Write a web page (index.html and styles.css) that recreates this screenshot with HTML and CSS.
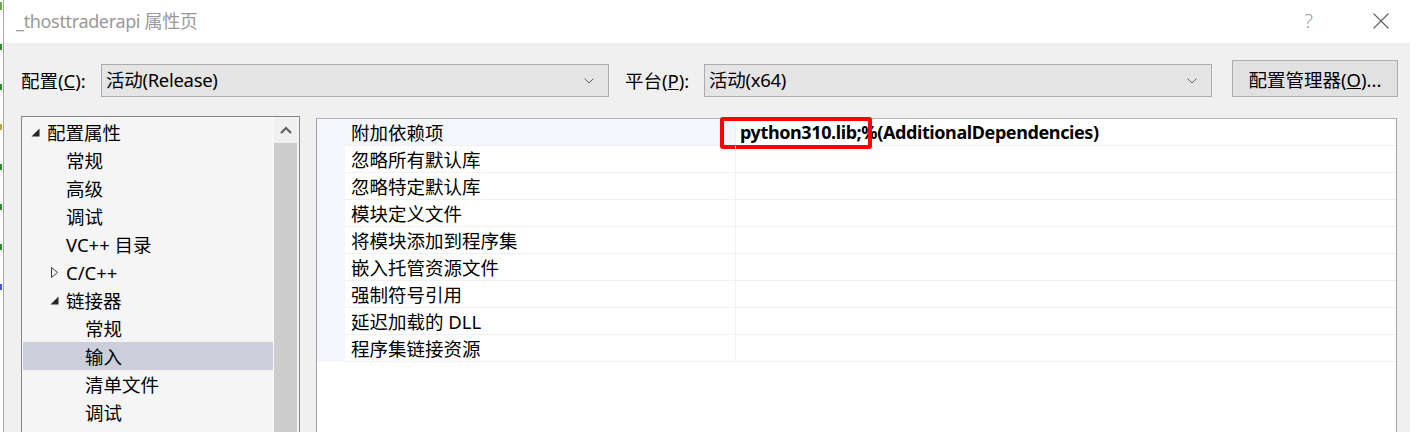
FILE: index.html
```html
<!DOCTYPE html>
<html lang="zh-CN">
<head>
<meta charset="utf-8">
<title>_thosttraderapi 属性页</title>
<link rel="stylesheet" href="styles.css">
</head>
<body>
<div class="screen">
  <div class="edge">
    <span class="bit b1"></span><span class="bit b2"></span><span class="bit b3"></span><span class="bit b4"></span><span class="bit b5"></span><span class="bit b6"></span><span class="bit b7"></span><span class="bit b8"></span>
  </div>
  <div class="dialog">
    <div class="titlebar">
      <span class="title">_thosttraderapi 属性页</span>
      <span class="help">?</span>
      <svg class="close" width="16" height="16" viewBox="0 0 16 16"><path d="M0.5 0.5L15.5 15.5M15.5 0.5L0.5 15.5" stroke="#5f5f5f" stroke-width="1.1" fill="none"/></svg>
    </div>
    <div class="toolbar">
      <span class="label">配置(<u>C</u>):</span>
      <div class="combo"><span>活动(Release)</span><svg class="chev" width="10" height="6" viewBox="0 0 10 6"><path d="M0.5 0.5L5 5L9.5 0.5" stroke="#606060" fill="none"/></svg></div>
      <span class="label label2">平台(<u>P</u>):</span>
      <div class="combo"><span>活动(x64)</span><svg class="chev" width="10" height="6" viewBox="0 0 10 6"><path d="M0.5 0.5L5 5L9.5 0.5" stroke="#606060" fill="none"/></svg></div>
      <button class="btn">配置管理器(<u>O</u>)...</button>
    </div>
    <div class="main">
      <div class="tree">
        <div class="tree-list">
          <div class="node l0"><span class="glyph"><svg width="9" height="9" viewBox="0 0 9 9"><path d="M8.5 0.5V8.5H0.5Z" fill="#262626"/></svg></span>配置属性</div>
          <div class="node l1"><span class="glyph"></span>常规</div>
          <div class="node l1"><span class="glyph"></span>高级</div>
          <div class="node l1"><span class="glyph"></span>调试</div>
          <div class="node l1"><span class="glyph"></span>VC++ 目录</div>
          <div class="node l1"><span class="glyph"><svg width="9" height="11" viewBox="0 0 9 11"><path d="M1.5 0.5V10.5L7.5 5.5Z" fill="none" stroke="#3c3c3c"/></svg></span>C/C++</div>
          <div class="node l1"><span class="glyph"><svg width="9" height="9" viewBox="0 0 9 9"><path d="M8.5 0.5V8.5H0.5Z" fill="#262626"/></svg></span>链接器</div>
          <div class="node l2"><span class="glyph"></span>常规</div>
          <div class="node l2 selected"><span class="glyph"></span>输入</div>
          <div class="node l2"><span class="glyph"></span>清单文件</div>
          <div class="node l2"><span class="glyph"></span>调试</div>
          <div class="node l2"><span class="glyph"></span>系统</div>
        </div>
        <div class="scrollbar">
          <div class="sb-up"><svg width="12" height="8" viewBox="0 0 12 8"><path d="M1 7L6 2L11 7" stroke="#606060" stroke-width="2.2" fill="none"/></svg></div>
          <div class="sb-thumb"></div>
        </div>
      </div>
      <div class="grid">
        <div class="row sel"><span class="gut"></span><span class="name">附加依赖项</span><span class="val">python310.lib;%(AdditionalDependencies)</span><span class="mark"></span></div>
        <div class="row"><span class="gut"></span><span class="name">忽略所有默认库</span><span class="val"></span></div>
        <div class="row"><span class="gut"></span><span class="name">忽略特定默认库</span><span class="val"></span></div>
        <div class="row"><span class="gut"></span><span class="name">模块定义文件</span><span class="val"></span></div>
        <div class="row"><span class="gut"></span><span class="name">将模块添加到程序集</span><span class="val"></span></div>
        <div class="row"><span class="gut"></span><span class="name">嵌入托管资源文件</span><span class="val"></span></div>
        <div class="row"><span class="gut"></span><span class="name">强制符号引用</span><span class="val"></span></div>
        <div class="row"><span class="gut"></span><span class="name">延迟加载的 DLL</span><span class="val"></span></div>
        <div class="row"><span class="gut"></span><span class="name">程序集链接资源</span><span class="val"></span></div>
      </div>
    </div>
  </div>
</div>
</body>
</html>
```
FILE: styles.css
```css
* { box-sizing: border-box; }
html, body {
  margin: 0;
  padding: 0;
  width: 1410px;
  height: 432px;
  overflow: hidden;
  background: #f0f0f0;
  font-family: "Noto Sans", "Noto Sans CJK SC", sans-serif;
  color: #000;
}
.screen {
  display: flex;
  width: 1410px;
  height: 432px;
}
.edge {
  width: 4px;
  flex: none;
  background: #fff;
  border-right: 1px solid #a9a9a9;
  display: flex;
  flex-direction: column;
}
.bit { display: block; width: 2px; height: 6px; background: #2e8b2e; margin-top: 34px; }
.bit.b1 { margin-top: 2px; height: 8px; background: #6aa84f; }
.bit.b4 { background: #c0a040; }
.bit.b8 { background: #3b5bd6; }
.dialog {
  flex: 1;
  display: flex;
  flex-direction: column;
}
.titlebar {
  height: 43px;
  background: #fff;
  display: flex;
  align-items: center;
  padding-left: 12px;
  flex: none;
}
.title {
  font-size: 18px;
  letter-spacing: -0.35px;
  color: #999;
  line-height: 1;
  margin-top: -1px;
  flex: 1;
}
.help {
  font-size: 20px;
  color: #a0a0a0;
  font-weight: 300;
  margin-right: 60px;
  margin-top: -2px;
}
.close { margin-right: 21px; margin-top: -2px; }
.toolbar {
  display: flex;
  align-items: flex-end;
  padding: 17px 0 0 17px;
  height: 54px;
  flex: none;
  font-size: 18.5px;
}
.label {
  width: 80px;
  height: 33px;
  line-height: 33px;
  flex: none;
}
.label2 { margin-left: 16px; width: 79px; }
.combo {
  width: 508px;
  height: 33px;
  background: #e5e5e5;
  border: 1px solid #acacac;
  display: flex;
  align-items: center;
  padding-left: 4px;
  padding-right: 14px;
  flex: none;
}
.combo span { flex: 1; line-height: 1; letter-spacing: -0.3px; }
.chev { margin-top: 1px; }
.btn {
  margin-left: 20px;
  width: 166px;
  height: 37px;
  background: #e1e1e1;
  border: 1px solid #adadad;
  font: inherit;
  font-size: 18.5px;
  color: #000;
  padding: 0;
  flex: none;
}
.main {
  display: flex;
  padding: 19px 0 0 17px;
  flex: 1;
  min-height: 0;
}
.tree {
  width: 279px;
  height: 320px;
  border: 1px solid #828790;
  border-bottom: none;
  background: #f5f5f5;
  display: flex;
  flex: none;
  overflow: hidden;
}
.tree-list {
  flex: 1;
  padding-top: 1px;
  padding-left: 1px;
  font-size: 18.5px;
}
.node {
  height: 28px;
  display: flex;
  align-items: center;
  white-space: nowrap;
}
.glyph {
  width: 18px;
  flex: none;
  display: flex;
  align-items: center;
  padding-left: 2px;
}
.l0 { padding-left: 6px; }
.l1 { padding-left: 25px; }
.l2 { padding-left: 44px; }
.selected { background: #cccedb; }
.scrollbar {
  width: 24px;
  margin-right: 2px;
  display: flex;
  flex-direction: column;
  border-left: 1px solid #fbfbfb;
  flex: none;
}
.sb-up {
  height: 26px;
  background: #f0f0f0;
  display: flex;
  align-items: center;
  justify-content: center;
  flex: none;
}
.sb-thumb { flex: 1; background: #cdcdcd; }
.grid {
  margin-left: 16px;
  margin-top: 2px;
  width: 1081px;
  height: 318px;
  border: 1px solid #a0a0a0;
  border-top-color: #b4b4b4;
  border-bottom: none;
  background: #fff;
  font-size: 18.5px;
  flex: none;
}
.row {
  height: 27px;
  display: flex;
  position: relative;
}
.gut {
  width: 28px;
  flex: none;
  background: #f3f6fb;
}
.name {
  width: 391px;
  flex: none;
  padding-left: 6px;
  display: flex;
  align-items: center;
  border-bottom: 1px solid #eff1f6;
  border-right: 1px solid #f0f0f0;
  white-space: nowrap;
}
.val {
  flex: 1;
  padding-left: 4px;
  display: flex;
  align-items: center;
  font-weight: 700;
  font-size: 18px;
  letter-spacing: -0.4px;
  border-bottom: 1px solid #eff1f6;
  white-space: nowrap;
}
.sel .name { background: #f3f6fb; }
.mark {
  position: absolute;
  left: 403px;
  top: -2px;
  width: 152px;
  height: 32px;
  border: 4px solid #ff0000;
  border-radius: 3px;
}
```
